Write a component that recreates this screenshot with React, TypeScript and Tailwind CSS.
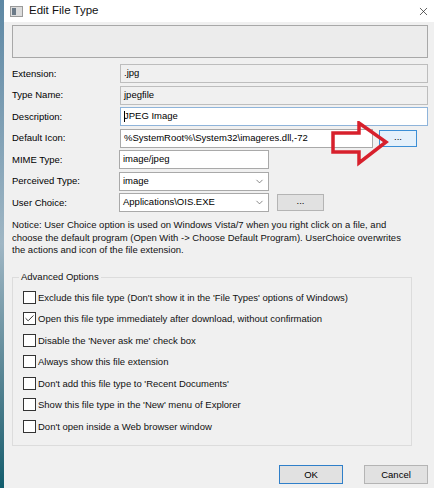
import { ChevronDown, Check, X } from "lucide-react";

const font = { fontFamily: '"Liberation Sans", Arial, sans-serif' };

const Label = ({ children }: { children: React.ReactNode }) => (
  <div className="w-[108px] shrink-0 text-[9.5px] leading-none text-black">{children}</div>
);

const Box = ({ checked, label }: { checked?: boolean; label: string }) => (
  <div className="flex h-[21.5px] items-center">
    <div className="flex h-[13px] w-[13px] shrink-0 items-center justify-center border border-[#333] bg-white">
      {checked && <Check className="h-[11px] w-[11px] text-[#222]" strokeWidth={2} />}
    </div>
    <span className="ml-[2px] whitespace-nowrap text-[9.5px] leading-none text-[#111]">{label}</span>
  </div>
);

const Btn = ({ children, className = "" }: { children: React.ReactNode; className?: string }) => (
  <div className={`flex items-center justify-center border text-[9.5px] leading-none text-black ${className}`}>{children}</div>
);

export default function App() {
  return (
    <div className="flex h-[488px] w-[434px] overflow-hidden bg-[#f0f0f0]" style={font}>
      {/* desktop strip on the left */}
      <div className="w-[4px] shrink-0 bg-gradient-to-b from-[#5d88a4] via-[#9fb6c4] to-[#0f5d6d]" />

      <div className="relative flex flex-1 flex-col">
        {/* title bar */}
        <div className="flex h-[22px] shrink-0 items-center bg-white pl-[6px] pr-[4px]">
          <div className="flex h-[11px] w-[13px] items-center border border-[#9a9a9a] bg-[#dcdcdc]">
            <div className="ml-[1px] h-[7px] w-[4px] bg-[#6b7a88]" />
          </div>
          <span className="ml-[6px] text-[11.5px] leading-none text-[#111]">Edit File Type</span>
          <X className="ml-auto h-[13px] w-[13px] text-[#222]" strokeWidth={1.3} />
        </div>

        <div className="flex flex-1 flex-col pl-[8px] pr-[6px]">
          <div className="mt-[3px] h-[33px] shrink-0 border border-[#a8a8a8] bg-[#ececec]" />

          <div className="mt-[6px] flex flex-col gap-[2.5px]">
            <div className="flex h-[19px] items-center">
              <Label>Extension:</Label>
              <div className="flex h-full flex-1 items-center border border-[#bdbdbd] bg-[#f0f0f0] pl-[3px] text-[9.5px]">.jpg</div>
            </div>
            <div className="flex h-[19px] items-center">
              <Label>Type Name:</Label>
              <div className="flex h-full flex-1 items-center border border-[#bdbdbd] bg-[#f0f0f0] pl-[3px] text-[9.5px]">jpegfile</div>
            </div>
            <div className="flex h-[19px] items-center">
              <Label>Description:</Label>
              <div className="flex h-full flex-1 items-center border border-[#8fb4da] bg-white pl-[3px] text-[9.5px]">
                <span className="mr-[-1px] h-[11px] w-px bg-black" />
                JPEG Image
              </div>
            </div>
            <div className="flex h-[19px] items-center">
              <Label>Default Icon:</Label>
              <div className="flex h-full w-[253px] items-center border border-[#a9a9a9] bg-white pl-[3px] text-[9.5px]">
                %SystemRoot%\System32\imageres.dll,-72
              </div>
              <Btn className="ml-[6px] h-[17px] w-[38px] border-[#3c8fd6] bg-[#e5f1fb] pb-[3px]">...</Btn>
            </div>
            <div className="flex h-[19px] items-center">
              <Label>MIME Type:</Label>
              <div className="ml-[-1px] flex h-full w-[150px] items-center border border-[#a9a9a9] bg-white pl-[3px] text-[9.5px]">image/jpeg</div>
            </div>
            <div className="flex h-[19px] items-center">
              <Label>Perceived Type:</Label>
              <div className="ml-[-1px] flex h-full w-[150px] items-center border border-[#a9a9a9] bg-white pl-[3px] pr-[3px] text-[9.5px]">
                image
                <ChevronDown className="ml-auto h-[11px] w-[11px] text-[#555]" strokeWidth={1.5} />
              </div>
            </div>
            <div className="flex h-[19px] items-center">
              <Label>User Choice:</Label>
              <div className="ml-[-1px] flex h-full w-[150px] items-center border border-[#a9a9a9] bg-white pl-[3px] pr-[3px] text-[9.5px]">
                Applications\OIS.EXE
                <ChevronDown className="ml-auto h-[11px] w-[11px] text-[#555]" strokeWidth={1.5} />
              </div>
              <Btn className="ml-[8px] h-[17px] w-[47px] border-[#b4b4b4] bg-[#e1e1e1] pb-[3px]">...</Btn>
            </div>
          </div>

          <p className="mt-[7px] whitespace-nowrap text-[9.5px] leading-[12.5px] text-[#111]">
            Notice: User Choice option is used on Windows Vista/7 when you right click on a file, and
            <br />
            choose the default program (Open With -&gt; Choose Default Program). UserChoice overwrites
            <br />
            the actions and icon of the file extension.
          </p>

          {/* Advanced Options group */}
          <div className="relative mt-[20px] w-[400px] border border-[#dcdcdc] px-[10px] pb-[8px] pt-[9px]">
            <span className="absolute left-[6px] top-[-6px] bg-[#f0f0f0] px-[2px] text-[9.5px] leading-none text-[#111]">
              Advanced Options
            </span>
            <Box label="Exclude  this file type (Don't show it in the 'File Types' options of Windows)" />
            <Box checked label="Open this file type immediately after download, without confirmation" />
            <Box label="Disable the 'Never ask me' check box" />
            <Box label="Always show this file extension" />
            <Box label="Don't add this file type to 'Recent Documents'" />
            <Box label="Show this file type in the 'New' menu of Explorer" />
            <Box label="Don't open inside a Web browser window" />
          </div>

          <div className="mt-[19px] flex justify-end gap-[21px]">
            <Btn className="h-[19px] w-[64px] border-[#2f7fc9] bg-[#e1e1e1]">OK</Btn>
            <Btn className="h-[19px] w-[64px] border-[#b4b4b4] bg-[#e1e1e1]">Cancel</Btn>
          </div>
        </div>

        {/* red annotation arrow */}
        <svg className="absolute left-[327px] top-[121px]" width="58" height="46" viewBox="0 0 58 46">
          <polygon
            points="2,12 28,12 28,2 55,21 28,42 28,31 2,31"
            fill="none"
            stroke="#d7202c"
            strokeWidth="3.5"
            strokeLinejoin="miter"
          />
        </svg>
      </div>
    </div>
  );
}
